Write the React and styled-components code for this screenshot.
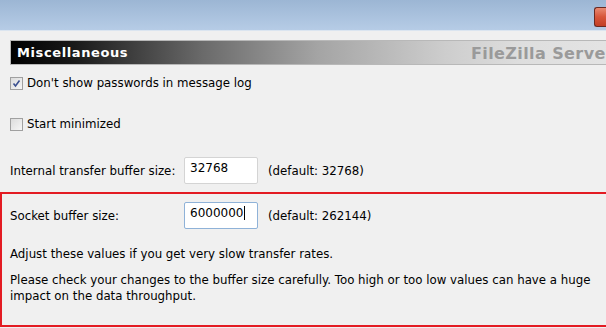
import React from "react";
import styled, { createGlobalStyle } from "styled-components";

const Global = createGlobalStyle`
  html, body { margin: 0; padding: 0; background: #f0f0f0; }
  body { width: 606px; height: 328px; overflow: hidden; font-family: "DejaVu Sans", Tahoma, sans-serif; font-size: 11.8px; color: #000; }
`;

const Page = styled.div`
  display: flex;
  flex-direction: column;
  width: 606px;
  height: 328px;
  overflow: hidden;
`;

const TitleStrip = styled.div`
  height: 31px;
  flex: none;
  background: linear-gradient(#9cb6d4, #b6cce6);
  border-bottom: 1px solid #dbe5f0;
  display: flex;
  justify-content: flex-end;
  align-items: flex-start;
  padding-top: 7px;
  box-sizing: border-box;
`;

const CloseButton = styled.div`
  width: 14px;
  height: 20px;
  margin-right: -2px;
  box-sizing: border-box;
  border: 1px solid #6b2a22;
  border-right: none;
  border-radius: 3px 0 0 3px;
  background: linear-gradient(#e88a72, #d7553a 50%, #c33f26);
`;

const Body = styled.div`
  display: flex;
  flex-direction: column;
  padding-left: 10px;
`;

const SectionHeader = styled.div`
  margin-top: 9px;
  height: 25px;
  width: 640px;
  box-sizing: border-box;
  border: 1px solid #b8b8b8;
  background: linear-gradient(90deg, #000 0%, #1a1a1a 10%, #6a6a6a 30%, #a4a4a4 48%, #cdcdcd 68%, #dedede 80%, #e6e6e6 100%);
  display: flex;
  align-items: center;
  padding: 0 0 0 6px;
  overflow: hidden;
`;

const HeaderTitle = styled.span`
  color: #fff;
  font-weight: bold;
  font-size: 13px;
  letter-spacing: 0.6px;
  width: 454px;
  flex: none;
`;

const HeaderBrand = styled.span`
  color: #9a9a9a;
  font-weight: bold;
  font-size: 16px;
  letter-spacing: 0.4px;
  white-space: nowrap;
  padding-top: 1px;
`;

const CheckRow = styled.label`
  display: flex;
  align-items: center;
  gap: 4px;
  margin-top: ${(p) => p.$top}px;
  height: 14px;
`;

const Box = styled.span`
  width: 13px;
  height: 13px;
  flex: none;
  box-sizing: border-box;
  border: 1px solid #a0a0a0;
  background: linear-gradient(135deg, #dcdcdc, #f6f6f6);
  display: flex;
  align-items: center;
  justify-content: center;
`;

const FieldRow = styled.div`
  display: flex;
  align-items: center;
  margin-top: ${(p) => p.$top}px;
`;

const Label = styled.span`
  width: 174px;
  flex: none;
`;

const Input = styled.div`
  width: 74px;
  height: 27px;
  flex: none;
  box-sizing: border-box;
  border: 1px solid ${(p) => (p.$focused ? "#8fb2d8" : "#d4d4d4")};
  border-radius: 2px;
  background: #fff;
  padding: 3px 0 0 5px;
  font-size: 12px;
  display: flex;
  align-items: flex-start;
`;

const Caret = styled.span`
  display: inline-block;
  width: 1px;
  height: 14px;
  background: #000;
  margin-left: 1px;
`;

const DefaultNote = styled.span`
  margin-left: 10px;
`;

const Highlight = styled.div`
  margin-top: 8px;
  border: 2px solid #e31b23;
  border-right: none;
  height: 135px;
  box-sizing: border-box;
  width: 620px;
  padding: 8px 0 0 8px;
  display: flex;
  flex-direction: column;
`;

const Para = styled.p`
  margin: ${(p) => p.$top}px 0 0 0;
  line-height: 16px;
  width: 592px;
`;

export default function App() {
  return (
    <>
      <Global />
      <Page>
        <TitleStrip>
          <CloseButton />
        </TitleStrip>
        <Body>
          <SectionHeader>
            <HeaderTitle>Miscellaneous</HeaderTitle>
            <HeaderBrand>FileZilla Server</HeaderBrand>
          </SectionHeader>
          <CheckRow $top={11}>
            <Box>
              <svg width="9" height="9" viewBox="0 0 9 9">
                <path d="M1.5 4.5 L3.5 7 L7.5 1.5" fill="none" stroke="#3a4f8f" strokeWidth="1.6" />
              </svg>
            </Box>
            <span>Don't show passwords in message log</span>
          </CheckRow>
          <CheckRow $top={27}>
            <Box />
            <span>Start minimized</span>
          </CheckRow>
          <FieldRow $top={26}>
            <Label>Internal transfer buffer size:</Label>
            <Input>32768</Input>
            <DefaultNote>(default: 32768)</DefaultNote>
          </FieldRow>
        </Body>
        <Highlight>
          <FieldRow $top={0}>
            <Label>Socket buffer size:</Label>
            <Input $focused>
              6000000
              <Caret />
            </Input>
            <DefaultNote>(default: 262144)</DefaultNote>
          </FieldRow>
          <Para $top={17}>Adjust these values if you get very slow transfer rates.</Para>
          <Para $top={10}>
            Please check your changes to the buffer size carefully. Too high or too low values can have a huge impact on the data throughput.
          </Para>
        </Highlight>
      </Page>
    </>
  );
}
